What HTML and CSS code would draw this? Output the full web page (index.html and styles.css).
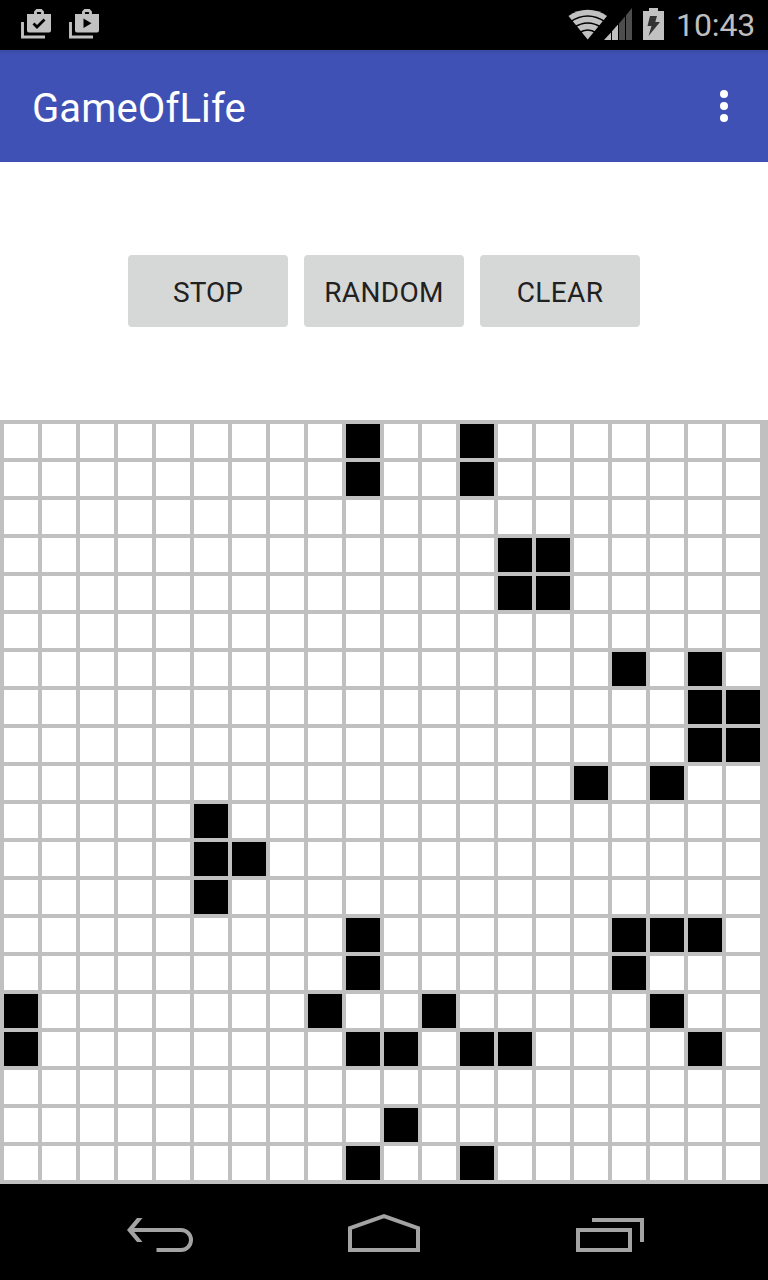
FILE: index.html
```html
<!DOCTYPE html>
<html lang="en">
<head>
<meta charset="utf-8">
<title>GameOfLife</title>
<link rel="stylesheet" href="styles.css">
</head>
<body>
<div class="screen">
  <header class="status">
    <svg class="notice" width="30" height="30" viewBox="0 0 30 30">
      <path class="line" d="M1.500 13V28H24"/>
      <path class="line" d="M14.500 6V3L16 1.500H20L21.500 3V6"/>
      <path class="fill" d="M6 5H30V21.500Q30 23.500 28 23.500H8Q6 23.500 6 21.500Z"/>
      <path class="check" d="M12.500 14.500L16 18L23.500 10.500"/>
    </svg>
    <svg class="notice" width="30" height="30" viewBox="0 0 30 30">
      <path class="line" d="M1.500 13V28H24"/>
      <path class="line" d="M14.500 6V3L16 1.500H20L21.500 3V6"/>
      <path class="fill" d="M6 5H30V21.500Q30 23.500 28 23.500H8Q6 23.500 6 21.500Z"/>
      <path d="M14.500 9.500V19L22.500 14.250Z"/>
    </svg>
    <span class="spacer"></span>
    <svg class="wifi" width="40" height="31" viewBox="0 0 40 31">
      <path class="fill" d="M.5 7Q9 .7 19.700 .7Q30.500 .7 39 7L19.700 30.500Z"/>
      <path class="gap" d="M2 13Q19.700 1 37.400 13M6 18.500Q19.700 9.500 33.400 18.500M11 24Q19.700 18 28.400 24"/>
    </svg>
    <svg class="signal" width="28" height="32" viewBox="0 0 28 32">
      <path class="fill" d="M0 32L7 24.500V32ZM8 32V23.300L14 16.500V32Z"/>
      <path class="dim" d="M15 32V15.500L21 8.500V32ZM22 32V7.300L28 0V32Z"/>
    </svg>
    <svg class="battery" width="21" height="32" viewBox="0 0 21 32">
      <path class="fill" d="M6 0H15V3H21V32H0V3H6Z"/>
      <path class="bolt" d="M7 8H14L12.300 14H17L5.500 28L8.500 18H4.500Z"/>
    </svg>
    <span class="clock">10:43</span>
  </header>
  <div class="toolbar">
    <h1 class="title">GameOfLife</h1>
    <svg width="8" height="32" viewBox="0 0 8 32" fill="#fff"><circle cx="4" cy="4" r="4"/><circle cx="4" cy="16" r="4"/><circle cx="4" cy="28" r="4"/></svg>
  </div>
  <div class="controls">
    <button class="btn">STOP</button>
    <button class="btn btn-wide">RANDOM</button>
    <button class="btn btn-wide">CLEAR</button>
  </div>
  <main class="board" id="board"></main>
  <nav class="nav">
    <svg class="back" width="67" height="38" viewBox="0 0 67 38"><path d="M2 16H54A10 10 0 0 1 54 36H29.500"/><path class="head" d="M10 4H15.500L5.500 16L15.500 28H10L0 16Z"/></svg>
    <svg class="home" width="72" height="38" viewBox="0 0 72 38"><path d="M2 14.200L36 2.200L70 14.200V36H2Z"/></svg>
    <svg class="recent" width="68" height="34" viewBox="0 0 68 34"><path d="M2 12H54V32H2ZM16 2H66V24"/></svg>
  </nav>
</div>
<script src="board.js"></script>
</body>
</html>
```

FILE: styles.css
```css
* { box-sizing: border-box; }
body { margin: 0; background: #fff; font-family: Roboto, sans-serif; }
svg { display: block; flex: none; }
.screen { width: 768px; height: 1280px; display: flex; flex-direction: column; overflow: hidden; }

.status { height: 50px; flex: none; display: flex; align-items: flex-start; background: #000; padding: 7px 12px 0 21px; }
.status svg { margin-top: 1px; }
.status .notice { margin: 2px 18px 0 0; }
.spacer { flex: 1; }
.fill { fill: #c1c1c1; }
.line { fill: none; stroke: #c1c1c1; stroke-width: 2.9; }
.check { fill: none; stroke: #000; stroke-width: 2.8; }
.status .wifi { margin-top: 2px; margin-right: -4px; }
.gap { fill: none; stroke: #000; stroke-width: 1.6; }
.dim { fill: #4d4d4d; }
.battery { margin-left: 11px; }
.bolt { fill: #333; }
.clock { margin-left: 12px; width: 80px; font-size: 32px; line-height: 36px; letter-spacing: -0.1px; color: #bebebe; white-space: nowrap; }

.toolbar { height: 112px; flex: none; display: flex; align-items: center; justify-content: space-between; padding: 0 40px 0 32px; background: linear-gradient(#394aa3 0, #3f51b5 5px); }
.title { margin: 5px 0 0; font-size: 40px; line-height: 48px; letter-spacing: 0.12px; font-weight: 400; color: #fff; }

.controls { height: 258px; flex: none; display: flex; align-items: center; justify-content: center; gap: 16px; }
.btn { width: 160px; height: 72px; padding: 3px 0 0; border: 0; border-radius: 4px; background: #d6d8d7; color: #212121; font: 400 28px/36px Roboto, sans-serif; }
.btn-wide { letter-spacing: 0.35px; }

.board { height: 764px; flex: none; display: grid; grid-template: repeat(20, 34px) / repeat(20, 34px); gap: 4px; padding: 4px; background: #c0c0c0; }
.cell { background: #fff; }
.alive { background: #000; }

.nav { height: 96px; flex: none; display: flex; align-items: flex-start; background: #000; padding: 30px 0 0 127px; }
.nav path { fill: none; stroke: #a3a3a3; stroke-width: 4; }
.nav .head { fill: #a3a3a3; stroke: none; }
.home { margin-left: 154px; }
.recent { margin: 4px 0 0 156px; }
```

FILE: board.js
```js
const live = {
  0: [9, 12], 1: [9, 12],
  3: [13, 14], 4: [13, 14],
  6: [16, 18], 7: [18, 19], 8: [18, 19], 9: [15, 17],
  10: [5], 11: [5, 6], 12: [5],
  13: [9, 16, 17, 18], 14: [9, 16], 15: [0, 8, 11, 17],
  16: [0, 9, 10, 12, 13, 18], 18: [10], 19: [9, 12]
};
const board = document.getElementById("board");
for (let row = 0; row < 20; row++) {
  for (let col = 0; col < 20; col++) {
    const cell = document.createElement("div");
    cell.className = (live[row] || []).includes(col) ? "cell alive" : "cell";
    board.appendChild(cell);
  }
}
```
